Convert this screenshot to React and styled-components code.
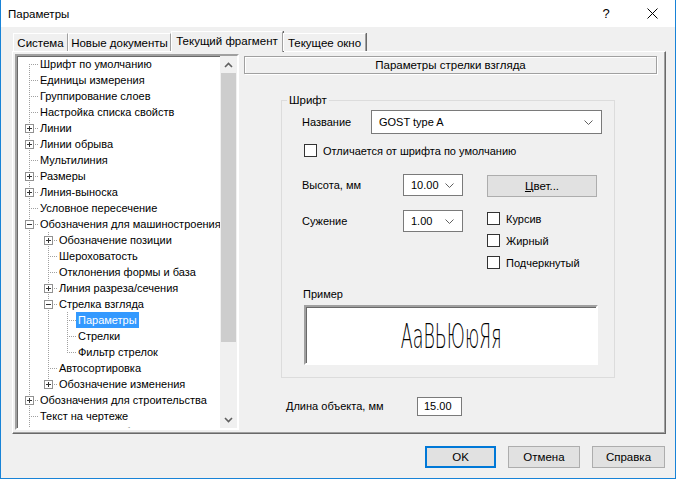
import React from 'react';
import styled, { createGlobalStyle } from 'styled-components';

const GlobalStyle = createGlobalStyle`
  html, body { margin: 0; padding: 0; background: #fff; }
  body { font-family: "Liberation Sans", Arial, sans-serif; font-size: 11px; color: #000; }
  * { box-sizing: border-box; }
`;

const Window = styled.div`
  width: 676px;
  height: 479px;
  display: flex;
  flex-direction: column;
  border: 1px solid #1883d7;
  border-top: none;
  background: #f0f0f0;
  overflow: hidden;
`;

const TitleBar = styled.div`
  height: 27px;
  flex: none;
  display: flex;
  align-items: center;
  background: #fff;
`;

const Title = styled.div`
  flex: 1;
  padding-left: 7px;
  font-size: 11.5px;
`;

const CaptionButton = styled.div`
  width: 46px;
  height: 27px;
  display: flex;
  align-items: center;
  justify-content: center;
  font-size: 13px;
`;

const Body = styled.div`
  flex: 1;
  display: flex;
  flex-direction: column;
  padding: 4px 9px 10px 11px;
`;

const TabStrip = styled.div`
  height: 20px;
  display: flex;
  align-items: flex-end;
  padding-left: 1px;
  position: relative;
  z-index: 1;
`;

const Tab = styled.div`
  width: ${p => p.w}px;
  height: ${p => (p.active ? 21 : 18)}px;
  margin-bottom: ${p => (p.active ? -1 : 0)}px;
  display: flex;
  align-items: center;
  justify-content: center;
  background: #f0f0f0;
  border-top: 1px solid #fff;
  border-left: 1px solid #fff;
  border-right: 1px solid #a0a0a0;
  box-shadow: 1px 0 0 #696969;
  font-size: 11.5px;
  white-space: nowrap;
  padding-bottom: ${p => (p.active ? 2 : 0)}px;
`;

const Panel = styled.div`
  height: 383px;
  display: flex;
  padding: 2px 0 0 2px;
  border-top: 1px solid #fff;
  border-left: 1px solid #fff;
  border-right: 1px solid #696969;
  border-bottom: 1px solid #696969;
  box-shadow: inset -1px -1px 0 #a0a0a0;
`;

/* ---------- tree ---------- */

const Tree = styled.div`
  width: 224px;
  height: 376px;
  flex: none;
  display: flex;
  background: #fff;
  border: 2px solid;
  border-color: #a0a0a0 #fff #fff #a0a0a0;
  box-shadow: inset 1px 1px 0 #696969;
  overflow: hidden;
`;

const TreeList = styled.div`
  flex: 1;
  min-width: 0;
  padding: 0 0 0 2px;
  overflow: hidden;
`;

const TreeRow = styled.div`
  height: 16px;
  display: flex;
  align-items: center;
  white-space: nowrap;
`;

const GuideSvg = styled.svg`
  flex: none;
  display: block;
`;

const TreeText = styled.span`
  padding: 0 2px;
  height: 16px;
  line-height: 16px;
  background: ${p => (p.selected ? '#3399ff' : 'transparent')};
  color: ${p => (p.selected ? '#fff' : '#000')};
`;

const ScrollBar = styled.div`
  width: 17px;
  flex: none;
  display: flex;
  flex-direction: column;
  background: #f0f0f0;
`;

const ScrollArrow = styled.div`
  height: 17px;
  display: flex;
  align-items: center;
  justify-content: center;
`;

const ScrollTrack = styled.div`
  flex: 1;
  padding: 0 1px;
`;

const ScrollThumb = styled.div`
  height: 269px;
  background: #cdcdcd;
`;

/* ---------- right side ---------- */

const RightCol = styled.div`
  width: 413px;
  margin-left: 5px;
  display: flex;
  flex-direction: column;
`;

const Header = styled.div`
  margin-top: 2px;
  height: 18px;
  display: flex;
  align-items: center;
  justify-content: center;
  border: 1px solid #a0a0a0;
  box-shadow: inset 1px 1px 0 #fff, 1px 1px 0 #fff;
  font-size: 11.5px;
`;

const Group = styled.div`
  position: relative;
  margin: 26px 0 0 37px;
  width: 334px;
  height: 278px;
  border: 1px solid #dcdcdc;
  padding: 9px 0 0 20px;
`;

const Legend = styled.span`
  position: absolute;
  top: -8px;
  left: 5px;
  padding: 0 2px;
  background: #f0f0f0;
  line-height: 14px;
  font-size: 11.5px;
`;

const Row = styled.div`
  display: flex;
  align-items: center;
  height: ${p => p.h || 22}px;
  margin-top: ${p => p.mt || 0}px;
  margin-left: ${p => p.ml || 0}px;
`;

const Label = styled.span`
  width: ${p => p.w}px;
  flex: none;
`;

const Select = styled.div`
  width: ${p => p.w}px;
  height: ${p => p.h || 22}px;
  display: flex;
  align-items: center;
  justify-content: space-between;
  padding: 0 8px 0 7px;
  background: #fff;
  border: 1px solid #7a7a7a;
`;

const CheckBox = styled.span`
  width: 13px;
  height: 13px;
  flex: none;
  background: #fff;
  border: 1px solid #333;
  margin-right: 6px;
`;

const Columns = styled.div`
  display: flex;
  margin-top: 17px;
`;

const Column = styled.div`
  width: ${p => p.w}px;
  display: flex;
  flex-direction: column;
  gap: ${p => p.gap || 0}px;
`;

const Button = styled.div`
  width: ${p => p.w}px;
  height: 22px;
  display: flex;
  align-items: center;
  justify-content: center;
  background: #e1e1e1;
  border: 1px solid ${p => (p.primary ? '#0078d7' : '#adadad')};
  box-shadow: ${p => (p.primary ? 'inset 0 0 0 1px #0078d7' : 'none')};
  font-size: 11.5px;
  margin-top: ${p => p.mt || 0}px;
`;

const ChecksList = styled.div`
  display: flex;
  flex-direction: column;
  gap: 9px;
  margin-top: 15px;
`;

const Preview = styled.div`
  width: 294px;
  height: 60px;
  margin: 4px 0 0 2px;
  display: flex;
  align-items: center;
  justify-content: center;
  background: #fff;
  border: 2px solid;
  border-color: #a0a0a0 #fff #fff #a0a0a0;
  box-shadow: inset 1px 1px 0 #696969;
  overflow: hidden;
`;

const PreviewText = styled.span`
  font-family: "DejaVu Sans", sans-serif;
  font-weight: 200;
  font-size: 33px;
  transform: scaleX(0.53);
  white-space: nowrap;
  margin-top: 2px;
`;

const Input = styled.div`
  width: 45px;
  height: 19px;
  display: flex;
  align-items: center;
  padding-left: 6px;
  background: #fff;
  border: 1px solid #7a7a7a;
`;

const ButtonRow = styled.div`
  margin-top: 12px;
  display: flex;
  justify-content: flex-end;
  gap: 12px;
  padding-right: 1px;
`;

/* ---------- drawings ---------- */

const Chevron = ({ color = '#606060' }) => (
  <svg width="9" height="5" viewBox="0 0 9 5">
    <polyline points="0.5,0.5 4.5,4.5 8.5,0.5" fill="none" stroke={color} strokeWidth="1" />
  </svg>
);

const ScrollChevron = ({ up }) => (
  <svg width="9" height="6" viewBox="0 0 9 6">
    <polyline
      points={up ? '1,5 4.5,1.5 8,5' : '1,1 4.5,4.5 8,1'}
      fill="none"
      stroke="#606060"
      strokeWidth="1.6"
    />
  </svg>
);

const dots = (x0, x1, y0, y1) => {
  const out = [];
  for (let x = x0; x < x1; x++) {
    for (let y = y0; y < y1; y++) {
      if ((x + y) % 2 === 0) out.push(<rect key={`${x}-${y}`} x={x} y={y} width="1" height="1" fill="#a0a0a0" />);
    }
  }
  return out;
};

// one indent cell of the tree: 19x16
const Guide = ({ kind, first, next, exp }) => {
  if (kind === 'none') return <GuideSvg width="19" height="16" />;
  if (kind === 'line') return <GuideSvg width="19" height="16">{dots(10, 11, 0, 16)}</GuideSvg>;
  return (
    <GuideSvg width="19" height="16">
      {exp ? (
        <>
          {!first && dots(10, 11, 0, 4)}
          {next && dots(10, 11, 13, 16)}
          {dots(15, 19, 8, 9)}
          <rect x="6.5" y="4.5" width="8" height="8" fill="#fff" stroke="#919191" />
          <rect x="8" y="8" width="5" height="1" fill="#333" />
          {exp === '+' && <rect x="10" y="6" width="1" height="5" fill="#333" />}
        </>
      ) : (
        <>
          {dots(10, 11, first ? 8 : 0, next ? 16 : 9)}
          {dots(11, 19, 8, 9)}
        </>
      )}
    </GuideSvg>
  );
};

const TREE = [
  [0, 'Шрифт по умолчанию'],
  [0, 'Единицы измерения'],
  [0, 'Группирование слоев'],
  [0, 'Настройка списка свойств'],
  [0, 'Линии', '+'],
  [0, 'Линии обрыва', '+'],
  [0, 'Мультилиния'],
  [0, 'Размеры', '+'],
  [0, 'Линия-выноска', '+'],
  [0, 'Условное пересечение'],
  [0, 'Обозначения для машиностроения', '-'],
  [1, 'Обозначение позиции', '+'],
  [1, 'Шероховатость'],
  [1, 'Отклонения формы и база'],
  [1, 'Линия разреза/сечения', '+'],
  [1, 'Стрелка взгляда', '-'],
  [2, 'Параметры', null, true],
  [2, 'Стрелки'],
  [2, 'Фильтр стрелок'],
  [1, 'Автосортировка'],
  [1, 'Обозначение изменения', '+'],
  [0, 'Обозначения для строительства', '+'],
  [0, 'Текст на чертеже'],
  [0, 'Технические требования'],
];

const continues = (i, level) => {
  for (let j = i + 1; j < TREE.length; j++) {
    if (TREE[j][0] <= level) return TREE[j][0] === level;
  }
  return level === 0;
};

const TreeView = () => (
  <Tree>
    <TreeList>
      {TREE.map(([level, text, exp, selected], i) => {
        const cells = [];
        for (let k = 0; k < level; k++) {
          cells.push(<Guide key={k} kind={continues(i, k) ? 'line' : 'none'} />);
        }
        cells.push(<Guide key="own" kind="own" first={i === 0} next={continues(i, level)} exp={exp} />);
        return (
          <TreeRow key={i}>
            {cells}
            <TreeText selected={selected}>{text}</TreeText>
          </TreeRow>
        );
      })}
    </TreeList>
    <ScrollBar>
      <ScrollArrow><ScrollChevron up /></ScrollArrow>
      <ScrollTrack><ScrollThumb /></ScrollTrack>
      <ScrollArrow><ScrollChevron /></ScrollArrow>
    </ScrollBar>
  </Tree>
);

const Check = ({ children }) => (
  <Row h={13}>
    <CheckBox />
    {children}
  </Row>
);

const App = () => (
  <>
    <GlobalStyle />
    <Window>
      <TitleBar>
        <Title>Параметры</Title>
        <CaptionButton>?</CaptionButton>
        <CaptionButton>
          <svg width="11" height="11" viewBox="0 0 11 11">
            <path d="M0.5 0.5 L10.5 10.5 M10.5 0.5 L0.5 10.5" stroke="#000" strokeWidth="1" />
          </svg>
        </CaptionButton>
      </TitleBar>
      <Body>
        <TabStrip>
          <Tab w={55}>Система</Tab>
          <Tab w={103}>Новые документы</Tab>
          <Tab w={112} active>Текущий фрагмент</Tab>
          <Tab w={83}>Текущее окно</Tab>
        </TabStrip>
        <Panel>
          <TreeView />
          <RightCol>
            <Header>Параметры стрелки взгляда</Header>
            <Group>
              <Legend>Шрифт</Legend>
              <Row h={24}>
                <Label w={69}>Название</Label>
                <Select w={231} h={24}>
                  GOST type A
                  <Chevron />
                </Select>
              </Row>
              <Row h={13} mt={10} ml={2}>
                <CheckBox />
                Отличается от шрифта по умолчанию
              </Row>
              <Columns>
                <Column w={185} gap={14}>
                  <Row>
                    <Label w={101}>Высота, мм</Label>
                    <Select w={60} h={22}>10.00<Chevron /></Select>
                  </Row>
                  <Row>
                    <Label w={101}>Сужение</Label>
                    <Select w={60} h={22}>1.00<Chevron /></Select>
                  </Row>
                </Column>
                <Column w={120}>
                  <Button w={110} mt={1}><span><u>Ц</u>вет...</span></Button>
                  <ChecksList>
                    <Check>Курсив</Check>
                    <Check>Жирный</Check>
                    <Check>Подчеркнутый</Check>
                  </ChecksList>
                </Column>
              </Columns>
              <Row h={14} mt={18} ml={1}>Пример</Row>
              <Preview>
                <PreviewText>АаВЬЮюЯя</PreviewText>
              </Preview>
            </Group>
            <Row h={20} mt={18} ml={42}>
              <Label w={131}>Длина объекта, мм</Label>
              <Input>15.00</Input>
            </Row>
          </RightCol>
        </Panel>
        <ButtonRow>
          <Button w={71} primary>OK</Button>
          <Button w={72}>Отмена</Button>
          <Button w={73}>Справка</Button>
        </ButtonRow>
      </Body>
    </Window>
  </>
);

export default App;
